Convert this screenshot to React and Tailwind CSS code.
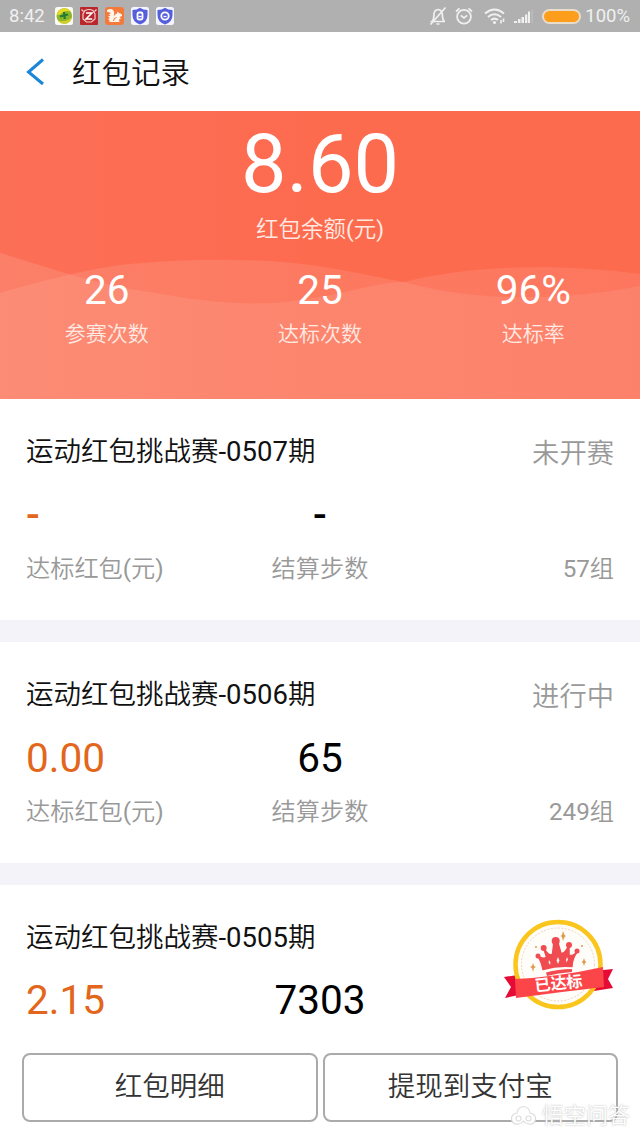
import React from "react";

const STATS = [
  { value: "26", label: "参赛次数" },
  { value: "25", label: "达标次数" },
  { value: "96%", label: "达标率" },
];

const RECORDS = [
  { id: "0507", bonus: "-", steps: "-", group: "57组", status: "未开赛" },
  { id: "0506", bonus: "0.00", steps: "65", group: "249组", status: "进行中" },
  { id: "0505", bonus: "2.15", steps: "7303", done: true },
];

function AppIcons() {
  return (
    <div className="flex gap-[7px] ml-[10px]">
      {/* coin */}
      <svg width="18" height="18" viewBox="0 0 18 18">
        <rect width="18" height="18" rx="2.5" fill="#fbfdf4" />
        <circle cx="9.3" cy="9" r="7.8" fill="#8db52b" />
        <path d="M1.8 8a7.8 7.8 0 0 1 14-3.5Q9 2.5 5.5 7.5z" fill="#e7d923" />
        <path d="M3 13.5q7 2.5 13.5-3-1 6-7 6.3-4 0-6.5-3.3z" fill="#d3cf28" />
        <path d="M5 9.5l8-2M9 5l.8 7" stroke="#227b31" strokeWidth="2.2" />
      </svg>
      {/* red badge */}
      <svg width="18" height="18" viewBox="0 0 18 18">
        <rect width="18" height="18" rx="1" fill="#b9262b" />
        <path
          d="M5 3.5Q9 1.5 13 3.5L15 7V12L11.5 15H6.5L3 12V7z"
          fill="none"
          stroke="#f3cccc"
          strokeWidth="1.2"
        />
        <path d="M6 6h6l-6 6h6.2" fill="none" stroke="#fff" strokeWidth="1.5" />
        <path d="M1.5 2.5l2 2M16.500 2.5l-2 2" stroke="#f3cccc" strokeWidth="1.2" />
      </svg>
      {/* squirrel */}
      <svg width="19" height="18" viewBox="0 0 19 18">
        <rect width="19" height="18" rx="3" fill="#f4793a" />
        <path
          d="M2 3Q6 .8 8.5 3.5Q10 6 8.7 9.5Q10 7 12 6.5L12.5 4.5L14 6Q17.5 7 17 9L14.5 10L16 11.5L14 12.5L14.5 15H6Q3.5 15 4.5 13L3 12L5 11L3 9.5L5.5 8.5L3.5 7L6 6.5Q5 4.5 2 5z"
          fill="#fff5ec"
        />
        <path d="M8.5 14q0-3 3-3.5" fill="none" stroke="#f4793a" />
      </svg>
      {/* shields */}
      {[0, 1].map((i) => (
        <svg key={i} width="18" height="18" viewBox="0 0 18 18">
          <rect width="18" height="18" rx="2.5" fill="#f4f5ff" />
          <path d="M9 .8Q12 3 16.5 3V8Q16.5 15 9 17.5 1.5 15 1.5 8V3Q6 3 9 .8z" fill="#555fdc" />
          {i === 0 ? (
            <rect x="6.5" y="5.5" width="5" height="7" rx="1.5" fill="#555fdc" stroke="#fff" strokeWidth="1.8" />
          ) : (
            <circle cx="9" cy="9" r="3.7" fill="#555fdc" stroke="#fff" strokeWidth="1.8" />
          )}
          <path d="M7.5 9.5h3" stroke="#fff" strokeWidth="1.3" />
        </svg>
      ))}
    </div>
  );
}

function StatusBar() {
  return (
    <div className="h-8 shrink-0 bg-[#b0b0b0] flex items-center pl-[9px] pr-[10px] text-[#f0f0f0] text-[18.5px]">
      <span className="leading-8">8:42</span>
      <AppIcons />
      <div className="ml-auto flex items-center">
        <svg width="18" height="20" viewBox="0 0 18 20" fill="none" stroke="currentColor" strokeWidth="1.7">
          <path d="M1.5 15.5h14.5M3.5 15q1.5-2 1.5-7 .3-4 4-4.5 4 .5 4.3 4.5 0 5 1.7 7M7.5 18h3" />
          <path d="M16.5 1.5L1.5 18.5" />
        </svg>
        <svg className="ml-[8px]" width="18" height="18" viewBox="0 0 18 18" fill="none" stroke="currentColor" strokeWidth="1.7">
          <circle cx="9" cy="9.8" r="6.9" />
          <path d="M5.8 8.3L9 11l3.2-2.7M1 4.5L4.5 1.3M13.5 1.3L17 4.5" />
        </svg>
        <svg className="ml-[11px]" width="22" height="18" viewBox="0 0 22 18" fill="none" stroke="currentColor" strokeWidth="2.1">
          <path d="M1 6.5Q10.5-1.5 20 6.5M4 10Q10.5 4.5 17 10M7 13Q10.5 10.2 14 13" />
          <circle cx="10.5" cy="15.5" r="1.6" fill="currentColor" stroke="none" />
          <path d="M17 13v3.5M19.5 11.5V15" strokeWidth="1.6" />
        </svg>
        <svg className="ml-[8px]" width="20" height="16" viewBox="0 0 20 16" fill="currentColor">
          <path d="M0 13h3v2H0zM4 11h2.500v4H4zM7.500 9H10v6H7.500zM11 6.500h2.300V15H11zM14 3.500h2V15h-2z" />
          <path d="M17.5 1.5H19V15h-1.5z" opacity=".2" />
        </svg>
        <div className="ml-[8px] w-[39px] h-[15px] rounded-full bg-[#fd9d1c] border-2 border-[#e8dccb]" />
        <span className="ml-[4px] leading-8">100%</span>
      </div>
    </div>
  );
}

function Waves() {
  return (
    <svg className="absolute inset-0" width="640" height="288" viewBox="0 0 640 288">
      <defs>
        <linearGradient id="wave" x1="0" y1="0" x2="640" y2="0" gradientUnits="userSpaceOnUse">
          <stop offset="0" stopColor="#fbb09c" stopOpacity=".25" />
          <stop offset="1" stopColor="#fba89c" stopOpacity=".2" />
        </linearGradient>
      </defs>
      <path d="M0 142C50 157 100 175 150 181C200 190 250 197 300 189C350 183 370 172 404 171C470 190 560 191 640 175V288H0z" fill="url(#wave)" />
      <path d="M0 182C45 169 80 160 120 154C200 146 270 147 330 157C360 162 385 168 404 171C470 154 560 152 640 163V288H0z" fill="url(#wave)" />
    </svg>
  );
}

function Hero() {
  return (
    <div className="relative h-[288px] bg-gradient-to-r from-[#fc6f57] via-[#fd6b4f] to-[#fd6b4f] text-white text-center">
      <Waves />
      <div className="relative">
        <div className="pt-[9px] text-[81px] leading-[90px]">8.60</div>
        <div className="mt-[3px] text-[22.5px] leading-[32px] text-[#ffe9e2]">红包余额(元)</div>
        <div className="mt-[21px] grid grid-cols-3">
          {STATS.map((s) => (
            <div key={s.label}>
              <div className="text-[40.5px] leading-[48px]">{s.value}</div>
              <div className="mt-[5px] text-[21px] leading-[30px] text-[#ffe9e2]">{s.label}</div>
            </div>
          ))}
        </div>
      </div>
    </div>
  );
}

function DoneBadge() {
  return (
    <svg width="112" height="92" viewBox="0 0 112 92">
      <path d="M2 59l20-3v20l-19 4 6-11z" fill="#e50b35" />
      <path d="M92 53l19-2-5 10 5 9-19 3z" fill="#e50b35" />
      <circle cx="56" cy="46.5" r="42.5" fill="#fffdfa" stroke="#fac61d" strokeWidth="4.5" />
      <circle cx="56" cy="46.5" r="36.5" fill="none" stroke="#e9c9aa" strokeWidth=".8" strokeDasharray="2 1.5" />
      {/* crown */}
      <path
        d="M36 38Q42 42 44.500 39L41.500 30Q47 39 50.500 36L52 23H55.500L59 35.500Q63 36 67 27L67 37Q70 39 75 34Q70 41 70 48.500Q56 47 41 51.500Q40 45 36 38z"
        fill="#f04b50"
        stroke="#f04b50"
        strokeWidth="1.5"
        strokeLinejoin="round"
      />
      <path d="M44 54.500Q56 51 70 51V54Q56 55 45 58z" fill="#f04b50" />
      <g fill="#f04b50">
        <circle cx="36" cy="38" r="2.5" />
        <circle cx="41.7" cy="30" r="3" />
        <circle cx="53.7" cy="23" r="4" />
        <circle cx="67" cy="27" r="3" />
        <circle cx="75" cy="33" r="2.5" />
      </g>
      <g fill="#dd9a4b">
        <path d="M61 13l1.5 4 1.5 1-1.500 1-1.500 4-1-4-1.500-1 1.500-1z" />
        <path d="M31 45l1 3 2 1-2 1-1 4-1-4-2-1 2-1z" />
        <path d="M82 40l1 3 1.5 1-1.500 1-1 3-1-3-1.500-1 1.500-1z" />
        <circle cx="34" cy="29" r="1" />
        <circle cx="80" cy="28" r="1" />
      </g>
      <path d="M56 39l1.5 3.500-1.500 3.500-1.500-3.500zM47 42l1.500 2.500-.5 2.500-1.500-2.500zM65 39l1 2.500-1.500 3-.5-2.500z" fill="#fff0e8" />
      <path d="M13 61Q56 59 101 49L102 69Q58 74 14 80z" fill="#fc4549" />
      <text
        x="56.5"
        y="71"
        textAnchor="middle"
        transform="rotate(-6 57 65)"
        fill="#fff"
        fontSize="16"
        fontWeight="700"
        className="font-['Noto_Sans_CJK_SC',sans-serif]"
      >
        已达标
      </text>
    </svg>
  );
}

function Record({ record }) {
  // bare dashes are drawn a little heavier than the figures
  const dash = record.steps === "-" ? "font-medium" : "";

  return (
    <div className="relative h-[221px] shrink-0 bg-white px-[26px]">
      <div className="flex justify-between pt-[35px]">
        <div className="text-[27.5px] leading-9 text-[#111]">运动红包挑战赛-{record.id}期</div>
        {record.status && (
          <div className="mt-[2px] text-[27.3px] leading-9 text-[#999]">{record.status}</div>
        )}
      </div>
      {record.done && (
        <div className="absolute top-[33px] right-[26px]">
          <DoneBadge />
        </div>
      )}
      <div className={`${record.status ? "mt-[19px]" : "mt-[20px]"} grid grid-cols-3 text-[40.5px] leading-[48px] ${dash}`}>
        <div className="text-[#e2661b]">{record.bonus}</div>
        <div className="text-center text-black">{record.steps}</div>
      </div>
      <div className="mt-[12px] grid grid-cols-3 text-[24.2px] leading-9 text-[#999]">
        <div>达标红包(元)</div>
        <div className="text-center">结算步数</div>
        <div className="text-right">{record.group}</div>
      </div>
    </div>
  );
}

export default function App() {
  return (
    <div className="relative w-[640px] h-[1137px] overflow-hidden bg-[#f3f3f9] flex flex-col font-['Roboto','Noto_Sans_CJK_SC_DemiLight','Noto_Sans_CJK_SC',sans-serif]">
      <StatusBar />
      <div className="h-[79px] shrink-0 bg-white flex items-center pl-[26px]">
        <svg width="19" height="28" viewBox="0 0 19 28" fill="none" stroke="#1b86d8" strokeWidth="3">
          <path d="M17 1.5L2.5 14 17 26" />
        </svg>
        <h1 className="mt-[3px] ml-[27px] text-[29.5px] leading-[40px] text-[#111]">红包记录</h1>
      </div>
      <Hero />
      <div className="flex flex-col gap-[22px]">
        {RECORDS.map((r) => (
          <Record key={r.id} record={r} />
        ))}
      </div>

      {/* Bottom actions stay above the list */}
      <div className="absolute inset-x-0 bottom-0 h-[107px] bg-white flex gap-[5px] px-[22px] pt-[23px] text-[27.5px] text-[#333]">
        <button className="flex-1 h-[69px] pb-[2px] rounded-lg border-2 border-[#aaa]">红包明细</button>
        <button className="flex-1 h-[69px] pb-[2px] rounded-lg border-2 border-[#aaa]">提现到支付宝</button>
      </div>

      {/* Watermark */}
      <div className="absolute right-[10px] bottom-[7px] flex items-center gap-[5px] text-white text-[22px] leading-[28px] [text-shadow:0_0_2px_#aaa]">
        <svg width="27" height="22" viewBox="0 0 27 22" fill="#fff" stroke="#ddd" strokeWidth="1.2">
          <path d="M7 8Q8 2 13.5 1.5 19 2 20 8 26 9 25.5 14.5 24 20 18.5 19 15 18.5 13.5 16 12 18.5 8.5 19 3 20 1.5 14.5 1 9 7 8z" />
          <circle cx="8.5" cy="13.5" r="2.5" />
          <circle cx="18.5" cy="13.5" r="2.5" />
        </svg>
        悟空问答
      </div>
    </div>
  );
}
